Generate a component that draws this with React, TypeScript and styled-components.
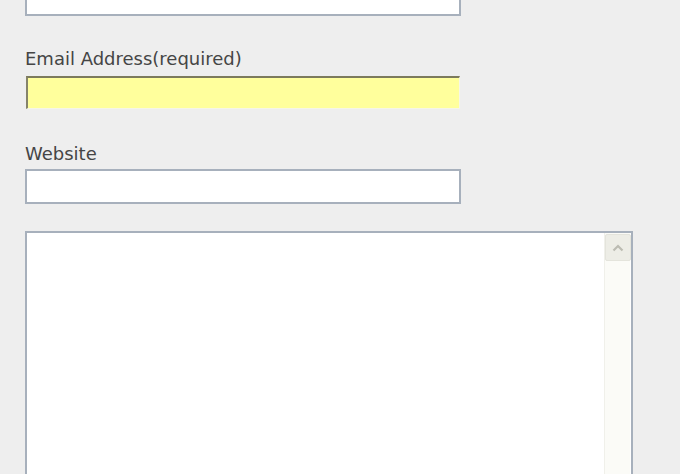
import styled, { createGlobalStyle } from 'styled-components';

const GlobalStyle = createGlobalStyle`
  html, body {
    margin: 0;
    padding: 0;
    background: #eeeeee;
    overflow: hidden;
  }
`;

const Form = styled.div`
  display: flex;
  flex-direction: column;
  align-items: flex-start;
  padding-left: 25px;
  font-family: "DejaVu Sans", Verdana, sans-serif;
`;

const Label = styled.label<{ $gap: number; $below: number }>`
  display: block;
  font-size: 18px;
  line-height: 20px;
  color: #454545;
  margin-top: ${(p) => p.$gap}px;
  margin-bottom: ${(p) => p.$below}px;
`;

const Input = styled.input<{ $offset?: number }>`
  box-sizing: border-box;
  width: 436px;
  height: 35px;
  margin: ${(p) => p.$offset ?? 0}px 0 0 0;
  padding: 0 6px;
  background: #ffffff;
  border: 2px solid #a7b0bc;
  outline: none;
  font: inherit;
`;

const RequiredInput = styled.input`
  box-sizing: border-box;
  width: 434px;
  height: 33px;
  margin: 0 0 0 1px;
  padding: 0 6px;
  background: #ffff9c;
  border-style: solid;
  border-width: 2px 1px 1px 2px;
  border-color: #7c7a5c #f6f6e6 #f6f6e6 #85836a;
  outline: none;
  font: inherit;
`;

const AreaFrame = styled.div`
  box-sizing: border-box;
  display: flex;
  width: 608px;
  height: 246px;
  margin-top: 27px;
  background: #ffffff;
  border: 2px solid #a7b0bc;
`;

const TextArea = styled.textarea`
  flex: 1;
  border: none;
  outline: none;
  resize: none;
  background: transparent;
  font: inherit;
`;

const Scrollbar = styled.div`
  box-sizing: border-box;
  width: 26px;
  margin-right: 1px;
  padding-top: 1px;
  background: #fbfbf7;
  border-left: 1px solid #f0f0ea;
  display: flex;
  flex-direction: column;
  align-items: center;
`;

const ScrollButton = styled.div`
  width: 24px;
  height: 25px;
  border-radius: 2px;
  background: #edede6;
  border: 1px solid #e4e4dc;
  display: flex;
  align-items: center;
  justify-content: center;
`;

export default function App() {
  return (
    <>
      <GlobalStyle />
      <Form>
        <Input type="text" $offset={-19} />
        <Label $gap={33} $below={7}>Email Address(required)</Label>
        <RequiredInput type="text" />
        <Label $gap={35} $below={5}>Website</Label>
        <Input type="text" />
        <AreaFrame>
          <TextArea />
          <Scrollbar>
            <ScrollButton>
              <svg width="12" height="8" viewBox="0 0 12 8">
                <path d="M1.5 6.5 L6 2 L10.5 6.5" fill="none" stroke="#bcbcb2" strokeWidth="2.2" />
              </svg>
            </ScrollButton>
          </Scrollbar>
        </AreaFrame>
      </Form>
    </>
  );
}
